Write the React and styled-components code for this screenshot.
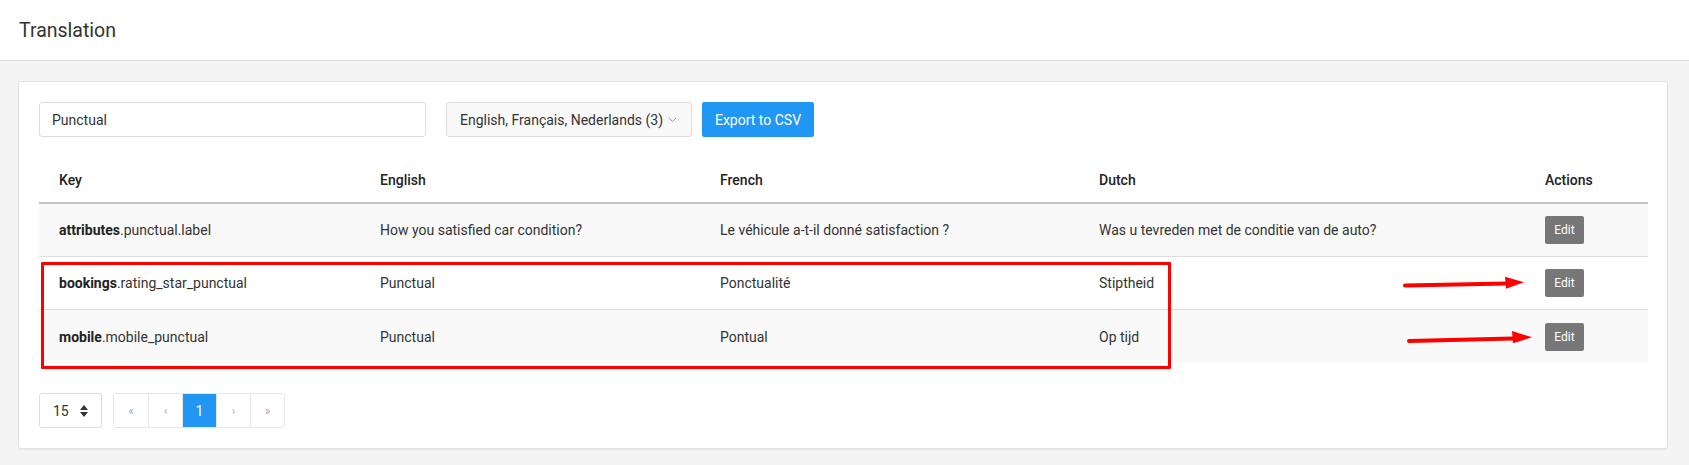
import styled, { createGlobalStyle } from "styled-components";

const GlobalStyle = createGlobalStyle`
  body {
    margin: 0;
    background: #f4f4f4;
    font-family: Roboto, "Liberation Sans", Arial, sans-serif;
    color: #333;
  }
  * { box-sizing: border-box; }
`;

const rows = [
  {
    ns: "attributes",
    key: ".punctual.label",
    en: "How you satisfied car condition?",
    fr: "Le véhicule a-t-il donné satisfaction ?",
    nl: "Was u tevreden met de conditie van de auto?",
  },
  {
    ns: "bookings",
    key: ".rating_star_punctual",
    en: "Punctual",
    fr: "Ponctualité",
    nl: "Stiptheid",
  },
  {
    ns: "mobile",
    key: ".mobile_punctual",
    en: "Punctual",
    fr: "Pontual",
    nl: "Op tijd",
  },
];

const columns = [
  { label: "Key", width: 321 },
  { label: "English", width: 340 },
  { label: "French", width: 379 },
  { label: "Dutch", width: 446 },
  { label: "Actions", width: 123 },
];

const App = () => {
  return (
    <>
      <GlobalStyle />
      <Header>
        <Title>Translation</Title>
      </Header>
      <Page>
        <Card>
          <Toolbar>
            <SearchInput defaultValue="Punctual" />
            <Dropdown>
              English, Français, Nederlands (3)
              <svg width="9" height="6" viewBox="0 0 9 6">
                <path d="M1 1l3.5 3.5L8 1" fill="none" stroke="#999" strokeWidth="1" />
              </svg>
            </Dropdown>
            <PrimaryButton>Export to CSV</PrimaryButton>
          </Toolbar>

          <Table>
            <colgroup>
              {columns.map(c => (
                <col key={c.label} style={{ width: c.width }} />
              ))}
            </colgroup>
            <thead>
              <tr>
                {columns.map(c => (
                  <Th key={c.label}>{c.label}</Th>
                ))}
              </tr>
            </thead>
            <tbody>
              {rows.map((r, i) => (
                <Row key={r.ns} striped={i % 2 === 0}>
                  <Td>
                    <b>{r.ns}</b>
                    {r.key}
                  </Td>
                  <Td>{r.en}</Td>
                  <Td>{r.fr}</Td>
                  <Td>{r.nl}</Td>
                  <Td>
                    <EditButton>Edit</EditButton>
                  </Td>
                </Row>
              ))}
            </tbody>
          </Table>

          <Footer>
            <PerPage>
              15
              <svg width="10" height="14" viewBox="0 0 10 14">
                <path d="M5 1l4 5H1z M5 13l4-5H1z" fill="#333" />
              </svg>
            </PerPage>
            <Pager>
              <PageBtn>«</PageBtn>
              <PageBtn>‹</PageBtn>
              <PageBtn active>1</PageBtn>
              <PageBtn>›</PageBtn>
              <PageBtn>»</PageBtn>
            </Pager>
          </Footer>

          {/* annotations drawn over the screenshot */}
          <Highlight />
          <Arrows width="1560" height="300" viewBox="0 0 1560 300">
            <path d="M1386 203.5L1488 201.5" stroke="#f00" strokeWidth="4" strokeLinecap="round" />
            <path d="M1486 194.7L1505 200.3L1487 206.7z" fill="#f00" />
            <path d="M1390 259L1494 256.5" stroke="#f00" strokeWidth="4" strokeLinecap="round" />
            <path d="M1493 249L1513 255.3L1494 261.3z" fill="#f00" />
          </Arrows>
        </Card>
      </Page>
    </>
  );
};

export default App;

// styled-components
const Header = styled.header`
  height: 61px;
  background: #fff;
  border-bottom: 1px solid #ddd;
  display: flex;
  align-items: center;
  padding: 0 19px;
`;
const Title = styled.h1`
  margin: 0;
  font-size: 19.5px;
  font-weight: 400;
  color: #333;
`;
const Page = styled.main`
  padding: 20px 21px 18px 18px;
`;
const Card = styled.section`
  position: relative;
  background: #fff;
  border: 1px solid #e2e2e2;
  border-radius: 3px;
  box-shadow: 0 1px 2px rgba(0, 0, 0, 0.06);
  padding: 20px;
`;
const Toolbar = styled.div`
  display: flex;
  align-items: center;
  height: 35px;
`;
const SearchInput = styled.input`
  width: 387px;
  height: 35px;
  padding: 0 12px;
  border: 1px solid #ddd;
  border-radius: 3px;
  font-family: inherit;
  font-size: 14px;
  color: #333;
  outline: none;
`;
const Dropdown = styled.div`
  margin-left: 20px;
  width: 246px;
  height: 35px;
  display: flex;
  align-items: center;
  justify-content: space-between;
  padding: 0 14px 0 13px;
  background: #f9f9f9;
  border: 1px solid #ddd;
  border-radius: 3px;
  font-size: 14px;
  color: #333;
`;
const PrimaryButton = styled.button`
  margin-left: 10px;
  width: 112px;
  height: 35px;
  border: 0;
  border-radius: 2px;
  background: #2196f3;
  color: #fff;
  font-family: inherit;
  font-size: 14px;
`;
const Table = styled.table`
  margin-top: 20px;
  width: 100%;
  table-layout: fixed;
  border-collapse: separate;
  border-spacing: 0;
  font-size: 14px;
`;
const Th = styled.th`
  height: 47px;
  padding: 0 20px;
  text-align: left;
  font-weight: 500;
  color: #222;
  border-bottom: 2px solid #c4c4c4;
`;
const Row = styled.tr`
  background: ${props => (props.striped ? "#f9f9f9" : "#fff")};
  &:not(:last-child) td {
    border-bottom: 1px solid #ddd;
  }
`;
const Td = styled.td`
  height: 53px;
  padding: 0 20px;
  color: #333;
  white-space: nowrap;
  b {
    font-weight: 700;
    color: #222;
  }
`;
const EditButton = styled.button`
  width: 39px;
  height: 28px;
  padding: 0;
  border: 0;
  border-radius: 2px;
  background: #777;
  color: #fff;
  font-family: inherit;
  font-size: 12px;
  vertical-align: middle;
`;
const Footer = styled.div`
  margin-top: 30px;
  display: flex;
  align-items: center;
  gap: 11px;
`;
const PerPage = styled.div`
  width: 63px;
  height: 35px;
  display: flex;
  align-items: center;
  justify-content: space-between;
  padding: 0 12px 0 13px;
  border: 1px solid #ddd;
  border-radius: 3px;
  font-size: 14px;
  color: #333;
`;
const Pager = styled.div`
  display: flex;
  border: 1px solid #e6e6e6;
  border-radius: 3px;
  overflow: hidden;
`;
const PageBtn = styled.span`
  width: 34px;
  height: 33px;
  display: flex;
  align-items: center;
  justify-content: center;
  font-size: ${props => (props.active ? "14px" : "12px")};
  color: ${props => (props.active ? "#fff" : "#aaa")};
  background: ${props => (props.active ? "#2196f3" : "#fff")};
  & + & {
    border-left: 1px solid #e6e6e6;
  }
`;
const Highlight = styled.div`
  position: absolute;
  left: 22px;
  top: 180px;
  width: 1130px;
  height: 107px;
  border: 3px solid #f00;
  border-radius: 1px;
  pointer-events: none;
`;
const Arrows = styled.svg`
  position: absolute;
  left: 0;
  top: 0;
  pointer-events: none;
`;
